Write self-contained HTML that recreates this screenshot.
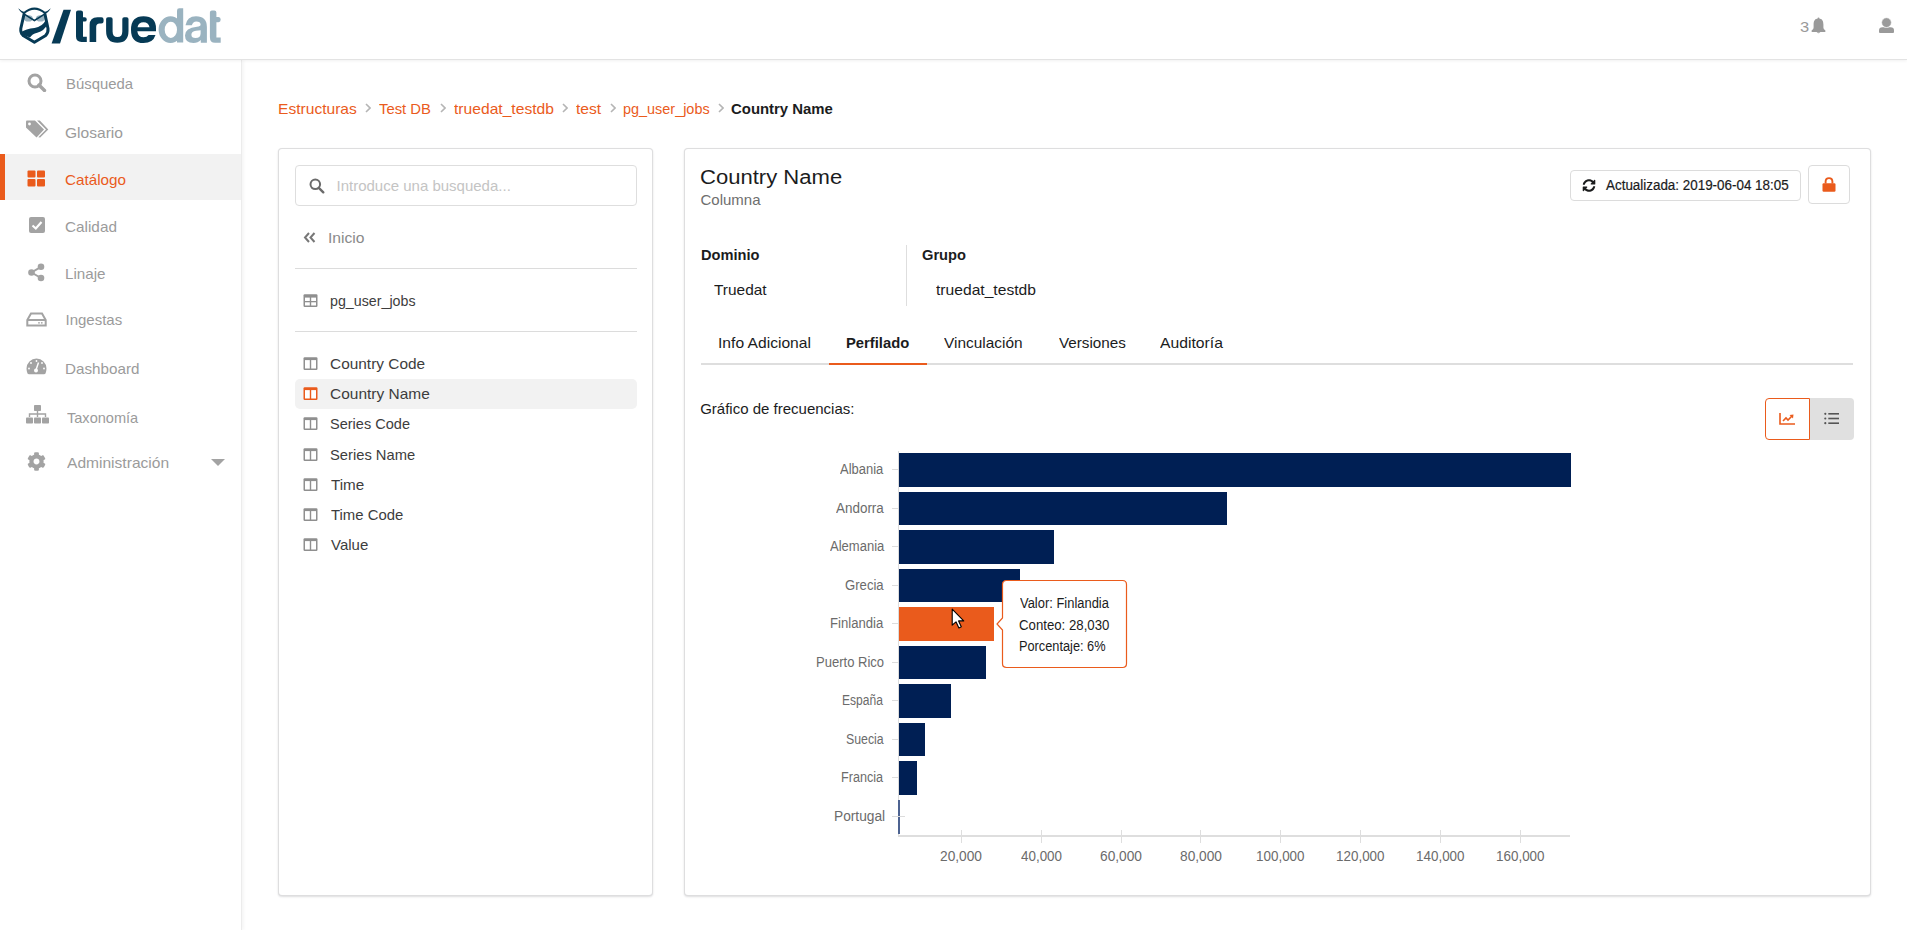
<!DOCTYPE html><html><head><meta charset="utf-8"><title>truedat</title><style>
html,body{margin:0;padding:0;}
body{width:1907px;height:930px;overflow:hidden;position:relative;background:#fff;font-family:"Liberation Sans", sans-serif;}
.abs{position:absolute;}
.t{position:absolute;white-space:nowrap;transform-origin:0 50%;}
.hdr{position:absolute;left:0;top:0;width:1907px;height:59px;background:#fff;border-bottom:1px solid #e3e3e3;box-shadow:0 1px 3px rgba(0,0,0,.06);}
.side{position:absolute;left:0;top:60px;width:241px;height:870px;background:#fff;box-shadow:1px 0 0 #ececec, 3px 0 3px rgba(0,0,0,.04);}
.card{position:absolute;background:#fff;border:1px solid rgba(34,36,38,.15);border-radius:4px;box-shadow:0 1px 2px 0 rgba(34,36,38,.15);}
</style></head><body>
<div class="side"></div>
<div class="hdr"></div>
<svg class="abs" style="left:0;top:0" width="240" height="58" viewBox="0 0 240 58">
<ellipse cx="28.4" cy="18.4" rx="4.4" ry="3.1" fill="#9ab3c0"/>
<ellipse cx="40.4" cy="18.4" rx="4.4" ry="3.1" fill="#9ab3c0"/>
<g fill="#063a55">
  <path d="M18.2 8.2 Q20.5 12.8 24.5 14.2 L25.2 12.2 Q21.5 11.5 18.2 8.2Z"/>
  <path d="M50.8 8.2 Q48.5 12.8 44.5 14.2 L43.8 12.2 Q47.5 11.5 50.8 8.2Z"/>
</g>
<path d="M24 13 Q34.4 4.2 45 13" fill="none" stroke="#063a55" stroke-width="2"/>
<path d="M23 12.6 L34.4 19.4 L45.8 12.6 L45.8 14.3 L34.4 21.6 L23 14.3Z" fill="#063a55"/>
<path d="M24.2 13.5 L20.8 28.5 Q20.3 33 23.5 35.8 L34.4 42.2 L45.3 35.8 Q48.5 33 48 28.5 L44.8 13.5" fill="none" stroke="#063a55" stroke-width="3.0" stroke-linejoin="round"/>
<path d="M20.8 32.2 Q26 28.6 34.5 27.9 Q42.3 26.8 45.7 20.2 L47.2 24.5 Q44.5 30.8 37.2 32.7 Q32 34 30 37.4 L26 36 L20.3 34.2 Z" fill="#063a55"/>
<!-- slash -->
<path d="M63.5 9.8 L71 9.8 L60 43.5 L51.6 43.5 Z" fill="#063a55"/>
<g fill="#063a55">
  <path d="M76 12.4 Q76 10.4 78 10.4 L80.8 10.4 Q83 10.4 83 12.6 L83 17.2 L84.6 17.2 Q86.8 17.2 86.8 19.4 Q86.8 21.6 84.6 21.6 L83 21.6 L83 36.8 L86.8 36.8 L86.8 41.9 L81.5 41.9 Q76 41.9 76 36.5Z"/>
  <path d="M89.6 41.9 L89.6 25 Q89.6 17.2 97.5 17.2 L101.4 17.2 Q103.6 17.2 103.6 19.5 L103.6 21.2 Q103.6 23.5 101.3 23.5 L99.5 23.5 Q96.2 23.5 96.2 27 L96.2 41.9Z"/>
  <path d="M106.1 19 Q106.1 17.2 108 17.2 L110.7 17.2 Q112.6 17.2 112.6 19 L112.6 31.5 Q112.6 37.1 117.4 37.1 Q122.3 37.1 122.3 31.5 L122.3 19 Q122.3 17.2 124.2 17.2 L126.6 17.2 Q128.5 17.2 128.5 19 L128.5 31 Q128.5 42.8 117.3 42.8 Q106.1 42.8 106.1 31Z"/>
  <path fill-rule="evenodd" d="M156 31.3 L137.3 31.3 Q138 37.3 143.6 37.3 Q146.8 37.3 148.6 35 L155.5 35 Q153 43.1 143.5 43.1 Q131 43.1 131 29.7 Q131 16.3 143.5 16.3 Q156 16.3 156 28.5Z M137.5 27.2 L149.5 27.2 Q148.5 22.3 143.5 22.3 Q138.5 22.3 137.5 27.2Z"/>
</g>
<g fill="#9ab3c0">
  <path fill-rule="evenodd" d="M158.6 29.6 A11.9 13.3 0 1 0 182.4 29.6 A11.9 13.3 0 1 0 158.6 29.6Z M164.7 29.85 A6.15 8.15 0 1 0 177 29.85 A6.15 8.15 0 1 0 164.7 29.85Z"/>
  <path d="M177 42.6 L177 10.5 Q177 8.2 179.3 8.2 L183.2 8.2 L183.2 42.6Z"/>
  <path fill-rule="evenodd" d="M185.5 25.3 L191.8 25.3 Q193 21.5 196.2 21.5 Q200.6 21.5 200.6 24.8 Q200.6 26.4 197 26.7 Q185 27.8 185 35.5 Q185 43 193.5 43 Q198 43 200.8 40 L200.8 42.8 L206.9 42.8 L206.9 27 Q206.9 16.3 196 16.3 Q187 16.3 185.5 25.3Z M191.4 34.8 Q191.4 31.4 196 30.8 L200.6 30.2 L200.6 33.5 Q200.6 38 195.5 38 Q191.4 38 191.4 34.8Z"/>
  <path d="M209.9 12.4 Q209.9 10.4 211.9 10.4 L214.3 10.4 Q216.4 10.4 216.4 12.6 L216.4 17 L218.5 17 Q220.7 17 220.7 19.6 Q220.7 22.2 218.5 22.2 L216.4 22.2 L216.4 37.5 L220.7 37.5 L220.7 42.7 L215 42.7 Q209.9 42.7 209.9 37.2Z"/>
</g>
</svg>
<span class="t" style="left:1799.90px;top:19.30px;font-size:15px;line-height:15px;color:#9a9a9a;font-weight:300;transform:scaleX(1.1000);">3</span>
<svg class="abs" style="left:1811px;top:17px" width="15" height="17" viewBox="0 0 15 17"><g fill="#9a9a9a"><circle cx="7.5" cy="1.6" r="1"/><path d="M7.5 1.6 C11.6 1.6 12.4 4.6 12.4 7.6 L12.4 10.4 Q12.4 12 13.9 13 Q14.5 13.4 14.5 14.2 Q14.5 14.9 13.8 14.9 L1.2 14.9 Q0.5 14.9 0.5 14.2 Q0.5 13.4 1.1 13 Q2.6 12 2.6 10.4 L2.6 7.6 C2.6 4.6 3.4 1.6 7.5 1.6Z"/><path d="M5.6 15.3 Q7.5 17.2 9.4 15.3Z"/></g></svg>
<svg class="abs" style="left:1878px;top:17px" width="17" height="17" viewBox="0 0 17 17"><g fill="#9a9a9a"><path d="M1 15 L1 13.2 Q1 10.2 4.5 10.2 L12.5 10.2 Q16 10.2 16 13.2 L16 15 Q16 15.9 15 15.9 L2 15.9 Q1 15.9 1 15Z"/><circle cx="8.5" cy="5.6" r="4.9" stroke="#fff" stroke-width="0.7"/></g></svg>
<div class="abs" style="left:0;top:154px;width:241px;height:46px;background:#f2f2f2"></div>
<div class="abs" style="left:0;top:154px;width:5px;height:46px;background:#ea5b1c"></div>
<svg class="abs" style="left:27px;top:73px" width="20" height="19" viewBox="0 0 20 19" fill="#a3a3a3"><circle cx="8" cy="8" r="6" fill="none" stroke="#a3a3a3" stroke-width="3"/><path d="M12 12 L17.5 17.5" stroke="#a3a3a3" stroke-width="3.4" stroke-linecap="round"/></svg>
<svg class="abs" style="left:25px;top:120px" width="24" height="18" viewBox="0 0 24 18" fill="#a3a3a3"><path d="M1 1.5 Q1 0.5 2 0.5 L10 0.5 L19 9.5 L11.5 17.5 L1 7.5Z"/><circle cx="4.5" cy="4" r="1.4" fill="#fff"/><path d="M12 0.5 L14.8 0.5 L23.3 9.5 L15.2 17.6 L13.3 17.2 L21 9.5Z"/></svg>
<svg class="abs" style="left:27px;top:170px" width="19" height="17" viewBox="0 0 19 17" fill="#ea5b1c"><rect x="0.5" y="0.5" width="8" height="7" rx="1"/><rect x="10" y="0.5" width="8" height="7" rx="1"/><rect x="0.5" y="9" width="8" height="7.5" rx="1"/><rect x="10" y="9" width="8" height="7.5" rx="1"/></svg>
<svg class="abs" style="left:29px;top:217px" width="17" height="17" viewBox="0 0 17 17" fill="#a3a3a3"><rect x="0" y="0" width="16" height="16" rx="2"/><path d="M3.5 8.5 L6.8 11.5 L12.5 5" fill="none" stroke="#fff" stroke-width="2.2"/></svg>
<svg class="abs" style="left:28px;top:263px" width="18" height="19" viewBox="0 0 18 19" fill="#a3a3a3"><circle cx="13" cy="3.8" r="3.3"/><circle cx="3.5" cy="9.5" r="3.3"/><circle cx="13" cy="15" r="3.3"/><path d="M13 3.8 L3.5 9.5 L13 15" fill="none" stroke="#a3a3a3" stroke-width="2"/></svg>
<svg class="abs" style="left:26px;top:312px" width="21" height="15" viewBox="0 0 21 15" fill="#a3a3a3"><path d="M1.3 13.5 L1.3 8 L5 1.5 L16 1.5 L19.7 8 L19.7 13.5Z" fill="none" stroke="#a3a3a3" stroke-width="2"/><path d="M1.3 8 L19.7 8" stroke="#a3a3a3" stroke-width="2"/><circle cx="13" cy="10.8" r="0.9"/><circle cx="15.8" cy="10.8" r="0.9"/></svg>
<svg class="abs" style="left:26px;top:358px" width="21" height="17" viewBox="0 0 21 17" fill="#a3a3a3"><path d="M10.5 0.5 A10 10 0 0 0 0.5 10.5 Q0.5 13 1.5 15.5 Q2 16.2 3 16.2 L18 16.2 Q19 16.2 19.5 15.5 Q20.5 13 20.5 10.5 A10 10 0 0 0 10.5 0.5Z"/><circle cx="10.5" cy="3" r="0.9" fill="#fff"/><circle cx="5" cy="5" r="0.9" fill="#fff"/><circle cx="16" cy="5" r="0.9" fill="#fff"/><circle cx="3" cy="10.5" r="0.9" fill="#fff"/><circle cx="18" cy="10.5" r="0.9" fill="#fff"/><circle cx="10" cy="12.5" r="2" fill="#fff"/><path d="M10 12 L12.5 4.5" stroke="#fff" stroke-width="1.4"/></svg>
<svg class="abs" style="left:26px;top:405px" width="23" height="19" viewBox="0 0 23 19" fill="#a3a3a3"><rect x="8" y="0" width="7" height="6" rx="0.8"/><path d="M11.5 6 L11.5 9 M3.5 12 L3.5 9 L19.5 9 L19.5 12 M11.5 9 L11.5 12" stroke="#a3a3a3" stroke-width="1.4" fill="none"/><rect x="0" y="12.5" width="7" height="6" rx="0.8"/><rect x="8" y="12.5" width="7" height="6" rx="0.8"/><rect x="16" y="12.5" width="7" height="6" rx="0.8"/></svg>
<svg class="abs" style="left:27px;top:452px" width="19" height="19" viewBox="0 0 512 512" fill="#a3a3a3"><path d="M487.4 315.7l-42.6-24.6c4.3-23.2 4.3-47 0-70.2l42.6-24.6c4.9-2.8 7.1-8.6 5.5-14-11.1-35.6-30-67.8-54.7-94.6-3.8-4.1-10-5.1-14.8-2.3L380.8 110c-17.9-15.4-38.5-27.3-60.8-35.1V25.8c0-5.6-3.9-10.5-9.4-11.7-36.7-8.2-74.3-7.8-109.2 0-5.5 1.2-9.4 6.1-9.4 11.7V75c-22.2 7.9-42.8 19.8-60.8 35.1L88.7 85.5c-4.9-2.8-11-1.9-14.8 2.3-24.7 26.7-43.6 58.9-54.7 94.6-1.7 5.4.6 11.2 5.5 14L67.3 221c-4.3 23.2-4.3 47 0 70.2l-42.6 24.6c-4.9 2.8-7.1 8.6-5.5 14 11.1 35.6 30 67.8 54.7 94.6 3.8 4.1 10 5.1 14.8 2.3l42.6-24.6c17.9 15.4 38.5 27.3 60.8 35.1v49.2c0 5.6 3.9 10.5 9.4 11.7 36.7 8.2 74.3 7.8 109.2 0 5.5-1.2 9.4-6.1 9.4-11.7v-49.2c22.2-7.9 42.8-19.8 60.8-35.1l42.6 24.6c4.9 2.8 11 1.9 14.8-2.3 24.7-26.7 43.6-58.9 54.7-94.6 1.5-5.5-.7-11.3-5.6-14.1zM256 336c-44.1 0-80-35.9-80-80s35.9-80 80-80 80 35.9 80 80-35.9 80-80 80z"/></svg>
<svg class="abs" style="left:211px;top:459px" width="14" height="7" viewBox="0 0 14 7" fill="#a3a3a3"><path d="M0 0 L14 0 L7 7Z"/></svg>
<span class="t" style="left:65.51px;top:76.30px;font-size:15px;line-height:15px;color:#9b9b9b;transform:scaleX(0.9925);">Búsqueda</span>
<span class="t" style="left:65.46px;top:125.30px;font-size:15px;line-height:15px;color:#9b9b9b;transform:scaleX(1.0370);">Glosario</span>
<span class="t" style="left:65.48px;top:171.80px;font-size:15px;line-height:15px;color:#ea5b1c;transform:scaleX(1.0169);">Catálogo</span>
<span class="t" style="left:65.48px;top:218.80px;font-size:15px;line-height:15px;color:#9b9b9b;transform:scaleX(1.0204);">Calidad</span>
<span class="t" style="left:65.49px;top:266.30px;font-size:15px;line-height:15px;color:#9b9b9b;transform:scaleX(1.0128);">Linaje</span>
<span class="t" style="left:65.50px;top:312.30px;font-size:15px;line-height:15px;color:#9b9b9b;">Ingestas</span>
<span class="t" style="left:65.49px;top:361.30px;font-size:15px;line-height:15px;color:#9b9b9b;transform:scaleX(1.0139);">Dashboard</span>
<span class="t" style="left:66.50px;top:410.30px;font-size:15px;line-height:15px;color:#9b9b9b;transform:scaleX(0.9703);">Taxonomía</span>
<span class="t" style="left:66.50px;top:455.30px;font-size:15px;line-height:15px;color:#9b9b9b;transform:scaleX(1.0378);">Administración</span>
<span class="t" style="left:277.96px;top:101.00px;font-size:15px;line-height:15px;color:#ea5b1c;transform:scaleX(1.0392);">Estructuras</span>
<span class="t" style="left:378.50px;top:101.00px;font-size:15px;line-height:15px;color:#ea5b1c;transform:scaleX(0.9904);">Test DB</span>
<span class="t" style="left:454.00px;top:101.00px;font-size:15px;line-height:15px;color:#ea5b1c;transform:scaleX(1.0421);">truedat_testdb</span>
<span class="t" style="left:576.00px;top:101.00px;font-size:15px;line-height:15px;color:#ea5b1c;transform:scaleX(1.0417);">test</span>
<span class="t" style="left:623.04px;top:101.00px;font-size:15px;line-height:15px;color:#ea5b1c;transform:scaleX(0.9618);">pg_user_jobs</span>
<svg class="abs" style="left:365px;top:103px" width="6" height="10" viewBox="0 0 6 10"><path d="M1 1 L5 5 L1 9" fill="none" stroke="#b5b5b5" stroke-width="1.6"/></svg>
<svg class="abs" style="left:440px;top:103px" width="6" height="10" viewBox="0 0 6 10"><path d="M1 1 L5 5 L1 9" fill="none" stroke="#b5b5b5" stroke-width="1.6"/></svg>
<svg class="abs" style="left:562px;top:103px" width="6" height="10" viewBox="0 0 6 10"><path d="M1 1 L5 5 L1 9" fill="none" stroke="#b5b5b5" stroke-width="1.6"/></svg>
<svg class="abs" style="left:610px;top:103px" width="6" height="10" viewBox="0 0 6 10"><path d="M1 1 L5 5 L1 9" fill="none" stroke="#b5b5b5" stroke-width="1.6"/></svg>
<svg class="abs" style="left:718px;top:103px" width="6" height="10" viewBox="0 0 6 10"><path d="M1 1 L5 5 L1 9" fill="none" stroke="#b5b5b5" stroke-width="1.6"/></svg>
<span class="t" style="left:731.01px;top:101.00px;font-size:15px;line-height:15px;color:#1b1c1d;font-weight:700;transform:scaleX(0.9941);">Country Name</span>
<div class="card" style="left:278px;top:148px;width:373px;height:746px"></div>
<div class="abs" style="left:295px;top:165px;width:340px;height:39px;border:1px solid #dedede;border-radius:4px;box-sizing:content-box"></div>
<svg class="abs" style="left:309px;top:178px" width="16" height="16" viewBox="0 0 16 16" fill="#6b6b6b"><circle cx="6.3" cy="6.3" r="4.8" fill="none" stroke="#6b6b6b" stroke-width="2"/><path d="M9.8 9.8 L14.3 14.3" stroke="#6b6b6b" stroke-width="2.4" stroke-linecap="round"/></svg>
<span class="t" style="left:336.50px;top:178.30px;font-size:15px;line-height:15px;color:#c4c4c4;">Introduce una busqueda...</span>
<svg class="abs" style="left:303px;top:232px" width="13" height="11" viewBox="0 0 13 11" fill="#777"><path d="M6 1 L2 5.5 L6 10 M11.5 1 L7.5 5.5 L11.5 10" fill="none" stroke="#777" stroke-width="2"/></svg>
<span class="t" style="left:327.96px;top:230.30px;font-size:15px;line-height:15px;color:#8a8a8a;transform:scaleX(1.0441);">Inicio</span>
<div class="abs" style="left:295px;top:268px;width:342px;height:1px;background:#dcdcdc"></div>
<div class="abs" style="left:295px;top:331px;width:342px;height:1px;background:#dcdcdc"></div>
<svg class="abs" style="left:303px;top:294px" width="15" height="13" viewBox="0 0 15 13" fill="#8f8f8f"><rect x="0.5" y="0.2" width="14" height="12.8" rx="1.2"/><rect x="2" y="3.6" width="4.8" height="3.4" fill="#fff"/><rect x="8.2" y="3.6" width="4.8" height="3.4" fill="#fff"/><rect x="2" y="8.3" width="4.8" height="3.2" fill="#fff"/><rect x="8.2" y="8.3" width="4.8" height="3.2" fill="#fff"/></svg>
<span class="t" style="left:330.05px;top:292.80px;font-size:15px;line-height:15px;color:#3d3d3d;transform:scaleX(0.9494);">pg_user_jobs</span>
<div class="abs" style="left:295px;top:379px;width:342px;height:30px;background:#f2f2f2;border-radius:5px"></div>
<svg class="abs" style="left:303px;top:357px" width="15" height="13" viewBox="0 0 15 13" fill="#8f8f8f"><rect x="0.5" y="0.2" width="14" height="12.8" rx="1.2"/><rect x="2" y="3.1" width="4.8" height="8.4" fill="#fff"/><rect x="8.2" y="3.1" width="4.8" height="8.4" fill="#fff"/></svg>
<span class="t" style="left:329.97px;top:356.30px;font-size:15px;line-height:15px;color:#3d3d3d;transform:scaleX(1.0275);">Country Code</span>
<svg class="abs" style="left:303px;top:387px" width="15" height="13" viewBox="0 0 15 13" fill="#ea5b1c"><rect x="0.5" y="0.2" width="14" height="12.8" rx="1.2"/><rect x="2" y="3.1" width="4.8" height="8.4" fill="#fff"/><rect x="8.2" y="3.1" width="4.8" height="8.4" fill="#fff"/></svg>
<span class="t" style="left:329.97px;top:386.30px;font-size:15px;line-height:15px;color:#3d3d3d;transform:scaleX(1.0316);">Country Name</span>
<svg class="abs" style="left:303px;top:417px" width="15" height="13" viewBox="0 0 15 13" fill="#8f8f8f"><rect x="0.5" y="0.2" width="14" height="12.8" rx="1.2"/><rect x="2" y="3.1" width="4.8" height="8.4" fill="#fff"/><rect x="8.2" y="3.1" width="4.8" height="8.4" fill="#fff"/></svg>
<span class="t" style="left:330.03px;top:416.30px;font-size:15px;line-height:15px;color:#3d3d3d;transform:scaleX(0.9691);">Series Code</span>
<svg class="abs" style="left:303px;top:448px" width="15" height="13" viewBox="0 0 15 13" fill="#8f8f8f"><rect x="0.5" y="0.2" width="14" height="12.8" rx="1.2"/><rect x="2" y="3.1" width="4.8" height="8.4" fill="#fff"/><rect x="8.2" y="3.1" width="4.8" height="8.4" fill="#fff"/></svg>
<span class="t" style="left:330.02px;top:447.30px;font-size:15px;line-height:15px;color:#3d3d3d;transform:scaleX(0.9824);">Series Name</span>
<svg class="abs" style="left:303px;top:478px" width="15" height="13" viewBox="0 0 15 13" fill="#8f8f8f"><rect x="0.5" y="0.2" width="14" height="12.8" rx="1.2"/><rect x="2" y="3.1" width="4.8" height="8.4" fill="#fff"/><rect x="8.2" y="3.1" width="4.8" height="8.4" fill="#fff"/></svg>
<span class="t" style="left:331.00px;top:477.30px;font-size:15px;line-height:15px;color:#3d3d3d;transform:scaleX(1.0156);">Time</span>
<svg class="abs" style="left:303px;top:508px" width="15" height="13" viewBox="0 0 15 13" fill="#8f8f8f"><rect x="0.5" y="0.2" width="14" height="12.8" rx="1.2"/><rect x="2" y="3.1" width="4.8" height="8.4" fill="#fff"/><rect x="8.2" y="3.1" width="4.8" height="8.4" fill="#fff"/></svg>
<span class="t" style="left:331.00px;top:507.30px;font-size:15px;line-height:15px;color:#3d3d3d;transform:scaleX(0.9931);">Time Code</span>
<svg class="abs" style="left:303px;top:538px" width="15" height="13" viewBox="0 0 15 13" fill="#8f8f8f"><rect x="0.5" y="0.2" width="14" height="12.8" rx="1.2"/><rect x="2" y="3.1" width="4.8" height="8.4" fill="#fff"/><rect x="8.2" y="3.1" width="4.8" height="8.4" fill="#fff"/></svg>
<span class="t" style="left:331.00px;top:537.30px;font-size:15px;line-height:15px;color:#3d3d3d;">Value</span>
<div class="card" style="left:684px;top:148px;width:1185px;height:746px"></div>
<span class="t" style="left:700.40px;top:166.57px;font-size:20px;line-height:20px;color:#1b1c1d;transform:scaleX(1.1024);">Country Name</span>
<span class="t" style="left:700.50px;top:192.30px;font-size:15px;line-height:15px;color:#6e6e6e;">Columna</span>
<div class="abs" style="left:1570px;top:170px;width:229px;height:29px;border:1px solid #dcdcdc;border-radius:4px"></div>
<svg class="abs" style="left:1582px;top:179px" width="14" height="13" viewBox="0 0 512 512" fill="#1b1c1d"><path d="M370.72 133.28C339.458 104.008 298.888 87.962 255.848 88c-77.458.068-144.328 53.178-162.791 126.85-1.344 5.363-6.122 9.15-11.651 9.15H24.103c-7.498 0-13.194-6.807-11.807-14.176C33.933 94.924 134.813 8 256 8c66.448 0 126.791 26.136 171.315 68.685L463.03 40.97C478.149 25.851 504 36.559 504 57.941V192c0 13.255-10.745 24-24 24H345.941c-21.382 0-32.09-25.851-16.971-40.971l41.75-41.749zM32 296h134.059c21.382 0 32.09 25.851 16.971 40.971l-41.75 41.75c31.262 29.273 71.835 45.319 114.876 45.28 77.418-.07 144.315-53.144 162.787-126.849 1.344-5.363 6.122-9.15 11.651-9.15h57.304c7.498 0 13.194 6.807 11.807 14.176C478.067 417.076 377.187 504 256 504c-66.448 0-126.791-26.136-171.315-68.685L48.97 471.03C33.851 486.149 8 475.441 8 454.059V320c0-13.255 10.745-24 24-24z"/></svg>
<span class="t" style="left:1606.00px;top:177.95px;font-size:14px;line-height:14px;color:#1b1c1d;transform:scaleX(0.9579);-webkit-text-stroke:0.2px #1b1c1d;">Actualizada: 2019-06-04 18:05</span>
<div class="abs" style="left:1808px;top:165px;width:40px;height:37px;border:1px solid #dcdcdc;border-radius:4px"></div>
<svg class="abs" style="left:1822px;top:177px" width="14" height="15" viewBox="0 0 14 15" fill="#ea5b1c"><path d="M3.6 6.5 L3.6 4.6 Q3.6 1.1 7 1.1 Q10.4 1.1 10.4 4.6 L10.4 6.5" fill="none" stroke="#ea5b1c" stroke-width="1.9"/><rect x="0.5" y="6.3" width="13" height="8.5" rx="1.2"/></svg>
<span class="t" style="left:700.53px;top:247.30px;font-size:15px;line-height:15px;color:#1b1c1d;font-weight:700;transform:scaleX(0.9746);">Dominio</span>
<span class="t" style="left:714.00px;top:282.30px;font-size:15px;line-height:15px;color:#1b1c1d;transform:scaleX(1.0294);">Truedat</span>
<div class="abs" style="left:906px;top:245px;width:1px;height:61px;background:#dedede"></div>
<span class="t" style="left:922.02px;top:247.30px;font-size:15px;line-height:15px;color:#1b1c1d;font-weight:700;transform:scaleX(0.9773);">Grupo</span>
<span class="t" style="left:936.00px;top:282.30px;font-size:15px;line-height:15px;color:#1b1c1d;transform:scaleX(1.0421);">truedat_testdb</span>
<div class="abs" style="left:701px;top:363px;width:1152px;height:2px;background:#dedede"></div>
<div class="abs" style="left:829px;top:363px;width:98px;height:2px;background:#ea5b1c"></div>
<span class="t" style="left:717.86px;top:335.40px;font-size:15px;line-height:15px;color:#1b1c1d;transform:scaleX(1.0420);">Info Adicional</span>
<span class="t" style="left:846.21px;top:335.40px;font-size:15px;line-height:15px;color:#1b1c1d;font-weight:700;transform:scaleX(0.9857);">Perfilado</span>
<span class="t" style="left:944.40px;top:335.40px;font-size:15px;line-height:15px;color:#1b1c1d;transform:scaleX(1.0276);">Vinculación</span>
<span class="t" style="left:1058.60px;top:335.40px;font-size:15px;line-height:15px;color:#1b1c1d;transform:scaleX(1.0154);">Versiones</span>
<span class="t" style="left:1160.20px;top:335.40px;font-size:15px;line-height:15px;color:#1b1c1d;transform:scaleX(1.0483);">Auditoría</span>
<span class="t" style="left:700.20px;top:401.00px;font-size:15px;line-height:15px;color:#1b1c1d;">Gráfico de frecuencias:</span>
<div class="abs" style="left:1810px;top:398px;width:44px;height:42px;background:#e0e0e0;border-radius:0 4px 4px 0"></div>
<div class="abs" style="left:1765px;top:398px;width:43px;height:40px;border:1px solid #ea5b1c;border-radius:4px 0 0 4px;background:#fff"></div>
<svg class="abs" style="left:1779px;top:413px" width="17" height="12" viewBox="0 0 17 12" fill="#ea5b1c"><path d="M1 0 L1 11 L16 11" fill="none" stroke="#ea5b1c" stroke-width="1.6"/><path d="M4 8 L7 5 L9 7 L13 3" fill="none" stroke="#ea5b1c" stroke-width="1.6"/><path d="M10.5 2 L14.5 1.5 L14 5.5Z"/></svg>
<svg class="abs" style="left:1824px;top:412px" width="16" height="13" viewBox="0 0 16 13" fill="#555"><circle cx="1.3" cy="1.8" r="1.1"/><circle cx="1.3" cy="6.5" r="1.1"/><circle cx="1.3" cy="11.2" r="1.1"/><rect x="4.3" y="1" width="10.7" height="1.6"/><rect x="4.3" y="5.7" width="10.7" height="1.6"/><rect x="4.3" y="10.4" width="10.7" height="1.6"/></svg>
<div class="abs" style="left:898px;top:451px;width:1px;height:385px;background:#dcdcdc"></div>
<div class="abs" style="left:898.5px;top:453.30px;width:672.2px;height:33.5px;background:#001f54"></div>
<div class="abs" style="left:898.5px;top:491.77px;width:328.0px;height:33.5px;background:#001f54"></div>
<div class="abs" style="left:898.5px;top:530.24px;width:155.7px;height:33.5px;background:#001f54"></div>
<div class="abs" style="left:898.5px;top:568.71px;width:121.5px;height:33.5px;background:#001f54"></div>
<div class="abs" style="left:898.5px;top:607.18px;width:95.5px;height:33.5px;background:#ea5b1c"></div>
<div class="abs" style="left:898.5px;top:645.65px;width:87.0px;height:33.5px;background:#001f54"></div>
<div class="abs" style="left:898.5px;top:684.12px;width:52.5px;height:33.5px;background:#001f54"></div>
<div class="abs" style="left:898.5px;top:722.59px;width:26.5px;height:33.5px;background:#001f54"></div>
<div class="abs" style="left:898.5px;top:761.06px;width:18.5px;height:33.5px;background:#001f54"></div>
<div class="abs" style="left:892px;top:469.4px;width:6px;height:1px;background:#dcdcdc"></div>
<span class="t" style="left:840.00px;top:462.35px;font-size:14px;line-height:14px;color:#6b6b6b;transform:scaleX(0.9255);">Albania</span>
<div class="abs" style="left:892px;top:507.9px;width:6px;height:1px;background:#dcdcdc"></div>
<span class="t" style="left:835.50px;top:500.85px;font-size:14px;line-height:14px;color:#6b6b6b;transform:scaleX(0.9600);">Andorra</span>
<div class="abs" style="left:892px;top:546.4px;width:6px;height:1px;background:#dcdcdc"></div>
<span class="t" style="left:829.50px;top:539.35px;font-size:14px;line-height:14px;color:#6b6b6b;transform:scaleX(0.9310);">Alemania</span>
<div class="abs" style="left:892px;top:584.9px;width:6px;height:1px;background:#dcdcdc"></div>
<span class="t" style="left:845.06px;top:577.85px;font-size:14px;line-height:14px;color:#6b6b6b;transform:scaleX(0.9375);">Grecia</span>
<div class="abs" style="left:892px;top:623.4px;width:6px;height:1px;background:#dcdcdc"></div>
<span class="t" style="left:830.06px;top:616.35px;font-size:14px;line-height:14px;color:#6b6b6b;transform:scaleX(0.9375);">Finlandia</span>
<div class="abs" style="left:892px;top:661.9px;width:6px;height:1px;background:#dcdcdc"></div>
<span class="t" style="left:815.57px;top:654.85px;font-size:14px;line-height:14px;color:#6b6b6b;transform:scaleX(0.9306);">Puerto Rico</span>
<div class="abs" style="left:892px;top:700.4px;width:6px;height:1px;background:#dcdcdc"></div>
<span class="t" style="left:842.14px;top:693.35px;font-size:14px;line-height:14px;color:#6b6b6b;transform:scaleX(0.8617);">España</span>
<div class="abs" style="left:892px;top:738.9px;width:6px;height:1px;background:#dcdcdc"></div>
<span class="t" style="left:845.62px;top:731.85px;font-size:14px;line-height:14px;color:#6b6b6b;transform:scaleX(0.8810);">Suecia</span>
<div class="abs" style="left:892px;top:777.4px;width:6px;height:1px;background:#dcdcdc"></div>
<span class="t" style="left:841.10px;top:770.35px;font-size:14px;line-height:14px;color:#6b6b6b;transform:scaleX(0.9022);">Francia</span>
<div class="abs" style="left:892px;top:815.9px;width:6px;height:1px;background:#dcdcdc"></div>
<span class="t" style="left:833.52px;top:808.85px;font-size:14px;line-height:14px;color:#6b6b6b;transform:scaleX(0.9800);">Portugal</span>
<div class="abs" style="left:898px;top:800px;width:2px;height:34px;background:#4d6391"></div>
<div class="abs" style="left:898px;top:816px;width:7px;height:1px;background:#dcdcdc"></div>
<div class="abs" style="left:898px;top:835px;width:672px;height:2px;background:#dedede"></div>
<div class="abs" style="left:960.9px;top:829.5px;width:1px;height:13px;background:#dedede"></div>
<span class="t" style="left:940.32px;top:849.05px;font-size:14px;line-height:14px;color:#6b6b6b;transform:scaleX(0.9805);">20,000</span>
<div class="abs" style="left:1040.7px;top:829.5px;width:1px;height:13px;background:#dedede"></div>
<span class="t" style="left:1021.13px;top:849.05px;font-size:14px;line-height:14px;color:#6b6b6b;transform:scaleX(0.9571);">40,000</span>
<div class="abs" style="left:1120.6px;top:829.5px;width:1px;height:13px;background:#dedede"></div>
<span class="t" style="left:1099.98px;top:849.05px;font-size:14px;line-height:14px;color:#6b6b6b;transform:scaleX(0.9805);">60,000</span>
<div class="abs" style="left:1200.4px;top:829.5px;width:1px;height:13px;background:#dedede"></div>
<span class="t" style="left:1179.81px;top:849.05px;font-size:14px;line-height:14px;color:#6b6b6b;transform:scaleX(0.9805);">80,000</span>
<div class="abs" style="left:1280.2px;top:829.5px;width:1px;height:13px;background:#dedede"></div>
<span class="t" style="left:1256.26px;top:849.05px;font-size:14px;line-height:14px;color:#6b6b6b;transform:scaleX(0.9592);">100,000</span>
<div class="abs" style="left:1360.0px;top:829.5px;width:1px;height:13px;background:#dedede"></div>
<span class="t" style="left:1336.09px;top:849.05px;font-size:14px;line-height:14px;color:#6b6b6b;transform:scaleX(0.9592);">120,000</span>
<div class="abs" style="left:1439.9px;top:829.5px;width:1px;height:13px;background:#dedede"></div>
<span class="t" style="left:1415.92px;top:849.05px;font-size:14px;line-height:14px;color:#6b6b6b;transform:scaleX(0.9592);">140,000</span>
<div class="abs" style="left:1519.7px;top:829.5px;width:1px;height:13px;background:#dedede"></div>
<span class="t" style="left:1495.75px;top:849.05px;font-size:14px;line-height:14px;color:#6b6b6b;transform:scaleX(0.9592);">160,000</span>
<svg class="abs" style="left:996px;top:579px" width="133" height="90" viewBox="0 0 133 90">
<path d="M10.5 1.5 L126.5 1.5 Q130.5 1.5 130.5 5.5 L130.5 84.5 Q130.5 88.5 126.5 88.5 L10.5 88.5 Q6.5 88.5 6.5 84.5 L6.5 51 L1 45 L6.5 39 L6.5 5.5 Q6.5 1.5 10.5 1.5Z" fill="#fff" stroke="#ea5b1c" stroke-width="1.2"/></svg>
<span class="t" style="left:1020.30px;top:595.95px;font-size:14px;line-height:14px;color:#1b1c1d;transform:scaleX(0.9240);">Valor: Finlandia</span>
<span class="t" style="left:1019.36px;top:617.55px;font-size:14px;line-height:14px;color:#1b1c1d;transform:scaleX(0.9436);">Conteo: 28,030</span>
<span class="t" style="left:1019.39px;top:639.15px;font-size:14px;line-height:14px;color:#1b1c1d;transform:scaleX(0.9117);">Porcentaje: 6%</span>
<svg class="abs" style="left:951px;top:608px" width="16" height="24" viewBox="0 0 16 24"><path d="M1.2 1.2 L1.2 17.2 L5 13.8 L7.9 19.9 L10.3 18.8 L7.6 12.9 L12.7 12.9Z" fill="#fff" stroke="#000" stroke-width="1.1" stroke-linejoin="round"/></svg>
</body></html>
